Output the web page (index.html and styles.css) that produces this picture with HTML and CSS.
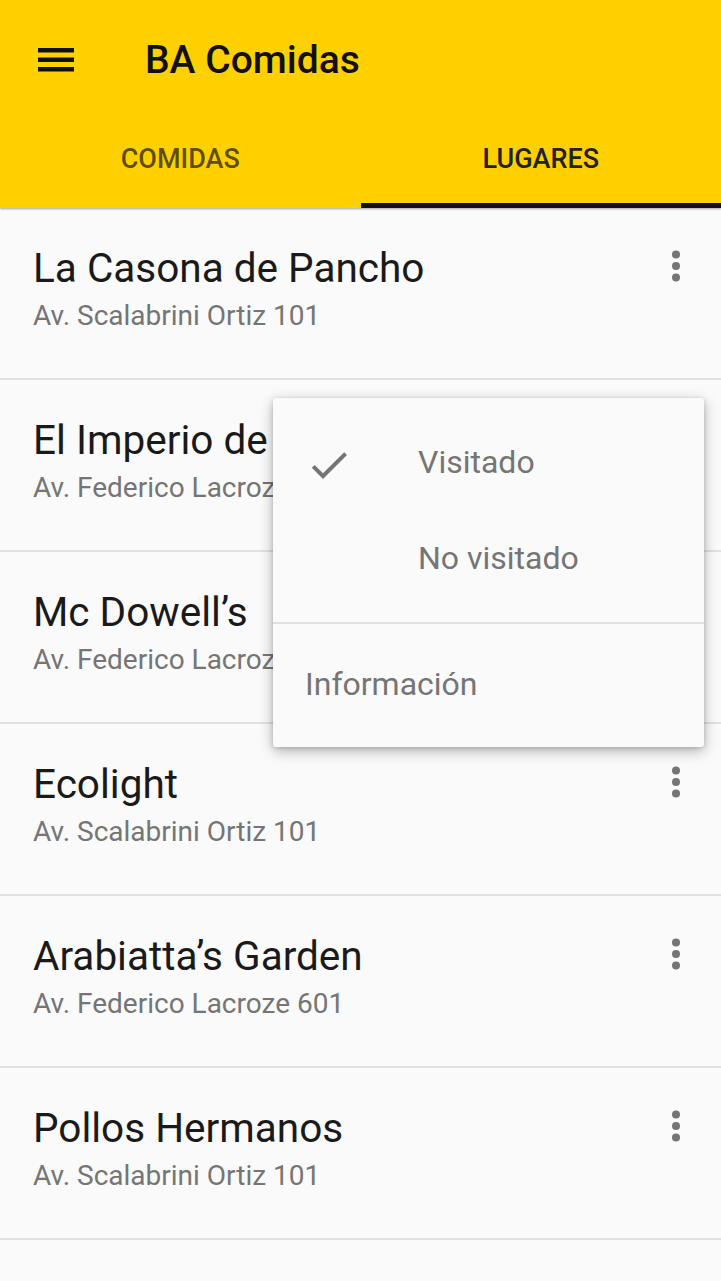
FILE: index.html
```html
<!DOCTYPE html>
<html lang="es">
<head>
<meta charset="utf-8">
<title>BA Comidas</title>
<link rel="stylesheet" href="styles.css">
</head>
<body>
<div class="screen">
  <header class="header">
    <div class="appbar">
      <button class="nav-btn" aria-label="Menú">
        <svg width="36" height="26" viewBox="0 0 36 26"><rect x="0" y="1" width="36" height="4.5" fill="#111"/><rect x="0" y="10.5" width="36" height="4.5" fill="#111"/><rect x="0" y="20" width="36" height="4.5" fill="#111"/></svg>
      </button>
      <h1 class="title">BA Comidas</h1>
    </div>
    <nav class="tabs">
      <div class="tab">COMIDAS</div>
      <div class="tab active">LUGARES</div>
    </nav>
  </header>
  <main class="list">
    <div class="row">
      <div class="row-text"><div class="row-title">La Casona de Pancho</div><div class="row-sub">Av. Scalabrini Ortiz 101</div></div>
      <svg class="dots" width="10" height="34" viewBox="0 0 10 34"><circle cx="5" cy="4.5" r="4"/><circle cx="5" cy="16" r="4"/><circle cx="5" cy="27.5" r="4"/></svg>
    </div>
    <div class="row">
      <div class="row-text"><div class="row-title">El Imperio de la Pizza</div><div class="row-sub">Av. Federico Lacroze 601</div></div>
      <svg class="dots" width="10" height="34" viewBox="0 0 10 34"><circle cx="5" cy="4.5" r="4"/><circle cx="5" cy="16" r="4"/><circle cx="5" cy="27.5" r="4"/></svg>
    </div>
    <div class="row">
      <div class="row-text"><div class="row-title">Mc Dowell’s</div><div class="row-sub">Av. Federico Lacroze 601</div></div>
      <svg class="dots" width="10" height="34" viewBox="0 0 10 34"><circle cx="5" cy="4.5" r="4"/><circle cx="5" cy="16" r="4"/><circle cx="5" cy="27.5" r="4"/></svg>
    </div>
    <div class="row">
      <div class="row-text"><div class="row-title">Ecolight</div><div class="row-sub">Av. Scalabrini Ortiz 101</div></div>
      <svg class="dots" width="10" height="34" viewBox="0 0 10 34"><circle cx="5" cy="4.5" r="4"/><circle cx="5" cy="16" r="4"/><circle cx="5" cy="27.5" r="4"/></svg>
    </div>
    <div class="row">
      <div class="row-text"><div class="row-title">Arabiatta’s Garden</div><div class="row-sub">Av. Federico Lacroze 601</div></div>
      <svg class="dots" width="10" height="34" viewBox="0 0 10 34"><circle cx="5" cy="4.5" r="4"/><circle cx="5" cy="16" r="4"/><circle cx="5" cy="27.5" r="4"/></svg>
    </div>
    <div class="row">
      <div class="row-text"><div class="row-title">Pollos Hermanos</div><div class="row-sub">Av. Scalabrini Ortiz 101</div></div>
      <svg class="dots" width="10" height="34" viewBox="0 0 10 34"><circle cx="5" cy="4.5" r="4"/><circle cx="5" cy="16" r="4"/><circle cx="5" cy="27.5" r="4"/></svg>
    </div>
  </main>
  <div class="popup">
    <div class="popup-group">
      <div class="popup-item checked">
        <svg class="check" width="48" height="48" viewBox="0 0 24 24"><path d="M9 16.17L4.83 12l-1.42 1.41L9 19 21 7l-1.41-1.41z" fill="#757575"/></svg>
        <span>Visitado</span>
      </div>
      <div class="popup-item"><span>No visitado</span></div>
    </div>
    <div class="popup-sep"></div>
    <div class="popup-group last">
      <div class="popup-item plain"><span>Información</span></div>
    </div>
  </div>
</div>
</body>
</html>
```

FILE: styles.css
```css
* { box-sizing: border-box; }
html, body { margin: 0; padding: 0; }
body {
  background: #fafafa;
  font-family: Roboto, "Noto Sans", "Liberation Sans", sans-serif;
  width: 721px;
  height: 1281px;
  overflow: hidden;
}
.screen {
  position: relative;
  width: 721px;
  height: 1281px;
  background: #fafafa;
}
.header {
  background: #ffd000;
  box-shadow: 0 1px 2px rgba(0,0,0,0.35);
  position: relative;
  z-index: 1;
}
.appbar {
  height: 120px;
  display: flex;
  align-items: center;
}
.nav-btn {
  border: 0;
  background: none;
  padding: 0;
  margin: 0 0 0 38px;
  width: 36px;
  height: 26px;
  display: flex;
}
.title {
  margin: 0 0 0 71px;
  font-size: 39px;
  font-weight: 500;
  color: #111;
  line-height: 1;
  position: relative;
  top: 0;
}
.tabs {
  display: flex;
  height: 88px;
}
.tab {
  flex: 1;
  display: flex;
  align-items: center;
  justify-content: center;
  font-size: 27px;
  font-weight: 500;
  color: rgba(0,0,0,0.65);
  border-bottom: 5px solid transparent;
  padding-bottom: 6px;
}
.tab.active {
  color: #222;
  border-bottom-color: #111;
}
.list {
  display: flex;
  flex-direction: column;
}
.row {
  height: 172px;
  border-bottom: 2px solid #e0e0e0;
  display: flex;
  align-items: flex-start;
  padding: 0 40px 0 33px;
}
.row-text {
  flex: 1;
  padding-top: 36px;
}
.row-title {
  font-size: 40.5px;
  color: #1a1a1a;
  line-height: 48px;
}
.row-sub {
  font-size: 28px;
  color: #757575;
  line-height: 40px;
  margin-top: 4px;
}
.dots {
  fill: #757575;
  margin-top: 42px;
}
.popup {
  position: absolute;
  left: 273px;
  top: 398px;
  width: 431px;
  height: 349px;
  background: #fafafa;
  border-radius: 3px;
  box-shadow: 0 4px 14px rgba(0,0,0,0.3), 0 1px 4px rgba(0,0,0,0.15);
  z-index: 2;
  display: flex;
  flex-direction: column;
}
.popup-group {
  padding: 16px 0;
}
.popup-group.last {
  padding: 12px 0 0;
}
.popup-item {
  height: 96px;
  display: flex;
  align-items: center;
  padding-left: 145px;
  font-size: 32px;
  color: #757575;
  line-height: 96px;
  position: relative;
}
.popup-item.plain {
  padding-left: 32px;
}
.check {
  position: absolute;
  left: 32px;
  top: 27px;
}
.popup-sep {
  height: 2px;
  background: #e0e0e0;
}
```
